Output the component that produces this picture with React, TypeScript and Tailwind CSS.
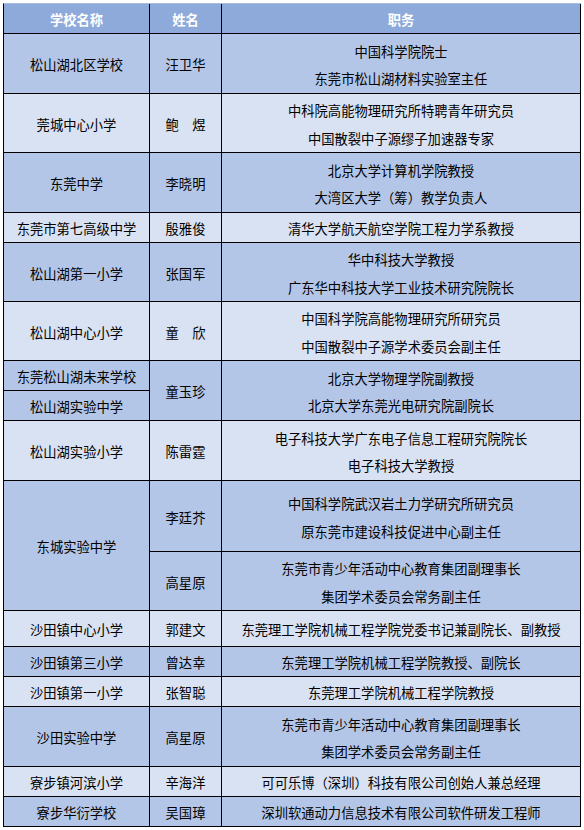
import type { ReactNode } from 'react';

const DARK = 'bg-[#b4c6e7]';
const LIGHT = 'bg-[#d9e2f3]';

type CellProps = {
  children?: ReactNode;
  rowSpan?: number;
  bg: string;
};

function Cell({ children, rowSpan, bg }: CellProps) {
  return (
    <td
      rowSpan={rowSpan}
      className={`${bg} border-r border-b border-black p-0 pt-[3px] text-center align-middle leading-[20px]`}
    >
      {children}
    </td>
  );
}

function Lines({ items }: { items: string[] }) {
  return (
    <div className="flex flex-col items-center">
      {items.map((t) => (
        <div key={t} className="leading-[27.5px] whitespace-nowrap">
          {t}
        </div>
      ))}
    </div>
  );
}

export default function App() {
  return (
    <div
      className="bg-white w-[584px] h-[830px] pt-[3px] pl-[3px]"
      style={{ fontFamily: '"Noto Sans CJK SC", "Noto Sans", sans-serif' }}
    >
      <div className="w-[578px] border-l border-t border-l-black border-t-[#a9bde0]">
        <table className="table-fixed border-separate border-spacing-0 w-[577px] text-[13.3px] text-black">
          <colgroup>
            <col className="w-[146px]" />
            <col className="w-[72px]" />
            <col className="w-[359px]" />
          </colgroup>
          <tbody>
            <tr className="h-[30px]">
              {['学校名称', '姓名', '职务'].map((h) => (
                <td
                  key={h}
                  className="bg-[#8eaadb] border-r border-b border-black p-0 pt-[3px] text-center align-middle leading-[20px] font-bold text-white"
                >
                  {h}
                </td>
              ))}
            </tr>

            <tr className="h-[60px]">
              <Cell bg={DARK}>松山湖北区学校</Cell>
              <Cell bg={DARK}>汪卫华</Cell>
              <Cell bg={DARK}>
                <Lines items={['中国科学院院士', '东莞市松山湖材料实验室主任']} />
              </Cell>
            </tr>

            <tr className="h-[59px]">
              <Cell bg={LIGHT}>莞城中心小学</Cell>
              <Cell bg={LIGHT}>鲍　煜</Cell>
              <Cell bg={LIGHT}>
                <Lines items={['中科院高能物理研究所特聘青年研究员', '中国散裂中子源缪子加速器专家']} />
              </Cell>
            </tr>

            <tr className="h-[60px]">
              <Cell bg={DARK}>东莞中学</Cell>
              <Cell bg={DARK}>李晓明</Cell>
              <Cell bg={DARK}>
                <Lines items={['北京大学计算机学院教授', '大湾区大学（筹）教学负责人']} />
              </Cell>
            </tr>

            <tr className="h-[30px]">
              <Cell bg={LIGHT}>东莞市第七高级中学</Cell>
              <Cell bg={LIGHT}>殷雅俊</Cell>
              <Cell bg={LIGHT}>清华大学航天航空学院工程力学系教授</Cell>
            </tr>

            <tr className="h-[59px]">
              <Cell bg={DARK}>松山湖第一小学</Cell>
              <Cell bg={DARK}>张国军</Cell>
              <Cell bg={DARK}>
                <Lines items={['华中科技大学教授', '广东华中科技大学工业技术研究院院长']} />
              </Cell>
            </tr>

            <tr className="h-[59px]">
              <Cell bg={LIGHT}>松山湖中心小学</Cell>
              <Cell bg={LIGHT}>童　欣</Cell>
              <Cell bg={LIGHT}>
                <Lines items={['中国科学院高能物理研究所研究员', '中国散裂中子源学术委员会副主任']} />
              </Cell>
            </tr>

            <tr className="h-[30px]">
              <Cell bg={DARK}>东莞松山湖未来学校</Cell>
              <Cell bg={DARK} rowSpan={2}>
                童玉珍
              </Cell>
              <Cell bg={DARK} rowSpan={2}>
                <Lines items={['北京大学物理学院副教授', '北京大学东莞光电研究院副院长']} />
              </Cell>
            </tr>
            <tr className="h-[30px]">
              <Cell bg={DARK}>松山湖实验中学</Cell>
            </tr>

            <tr className="h-[60px]">
              <Cell bg={LIGHT}>松山湖实验小学</Cell>
              <Cell bg={LIGHT}>陈雷霆</Cell>
              <Cell bg={LIGHT}>
                <Lines items={['电子科技大学广东电子信息工程研究院院长', '电子科技大学教授']} />
              </Cell>
            </tr>

            <tr className="h-[71px]">
              <Cell bg={DARK} rowSpan={2}>
                东城实验中学
              </Cell>
              <Cell bg={DARK}>李廷芥</Cell>
              <Cell bg={DARK}>
                <Lines items={['中国科学院武汉岩土力学研究所研究员', '原东莞市建设科技促进中心副主任']} />
              </Cell>
            </tr>
            <tr className="h-[59px]">
              <Cell bg={DARK}>高星原</Cell>
              <Cell bg={DARK}>
                <Lines items={['东莞市青少年活动中心教育集团副理事长', '集团学术委员会常务副主任']} />
              </Cell>
            </tr>

            <tr className="h-[36px]">
              <Cell bg={LIGHT}>沙田镇中心小学</Cell>
              <Cell bg={LIGHT}>郭建文</Cell>
              <Cell bg={LIGHT}>东莞理工学院机械工程学院党委书记兼副院长、副教授</Cell>
            </tr>

            <tr className="h-[30px]">
              <Cell bg={DARK}>沙田镇第三小学</Cell>
              <Cell bg={DARK}>曾达幸</Cell>
              <Cell bg={DARK}>东莞理工学院机械工程学院教授、副院长</Cell>
            </tr>

            <tr className="h-[30px]">
              <Cell bg={LIGHT}>沙田镇第一小学</Cell>
              <Cell bg={LIGHT}>张智聪</Cell>
              <Cell bg={LIGHT}>东莞理工学院机械工程学院教授</Cell>
            </tr>

            <tr className="h-[60px]">
              <Cell bg={DARK}>沙田实验中学</Cell>
              <Cell bg={DARK}>高星原</Cell>
              <Cell bg={DARK}>
                <Lines items={['东莞市青少年活动中心教育集团副理事长', '集团学术委员会常务副主任']} />
              </Cell>
            </tr>

            <tr className="h-[30px]">
              <Cell bg={LIGHT}>寮步镇河滨小学</Cell>
              <Cell bg={LIGHT}>辛海洋</Cell>
              <Cell bg={LIGHT}>可可乐博（深圳）科技有限公司创始人兼总经理</Cell>
            </tr>

            <tr className="h-[30px]">
              <Cell bg={DARK}>寮步华衍学校</Cell>
              <Cell bg={DARK}>吴国璋</Cell>
              <Cell bg={DARK}>深圳软通动力信息技术有限公司软件研发工程师</Cell>
            </tr>
          </tbody>
        </table>
      </div>
    </div>
  );
}
